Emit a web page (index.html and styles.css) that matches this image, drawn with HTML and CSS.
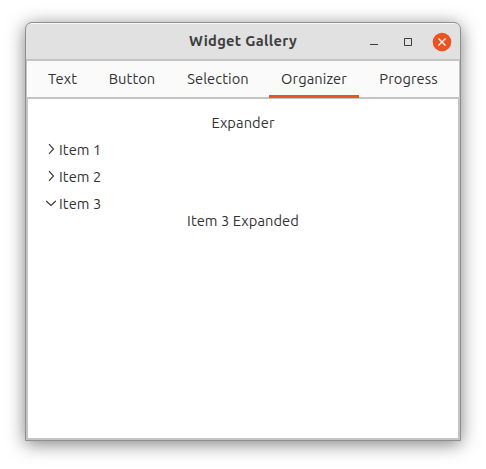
FILE: index.html
```html
<!DOCTYPE html>
<html lang="en">
<head>
<meta charset="utf-8">
<title>Widget Gallery</title>
<link rel="stylesheet" href="styles.css">
</head>
<body>
<main class="window">
  <header class="titlebar">
    <h1 class="title">Widget Gallery</h1>
    <div class="controls">
      <svg class="control" viewBox="0 0 20 20"><path d="M6 12.5h8" stroke="#3d3d3d"/></svg>
      <svg class="control" viewBox="0 0 20 20"><path d="M6.5 6.5h7v7h-7z" fill="none" stroke="#3d3d3d"/></svg>
      <svg class="control" viewBox="0 0 20 20"><circle cx="10" cy="10" r="9.3" fill="#e95420"/><path d="M6.5 6.5l7 7M13.5 6.5l-7 7" stroke="#fff" stroke-width="1.3"/></svg>
    </div>
  </header>
  <section class="notebook">
    <nav class="tabs">
      <div class="tab"><span>Text</span></div>
      <div class="tab"><span>Button</span></div>
      <div class="tab"><span>Selection</span></div>
      <div class="tab active"><span>Organizer</span></div>
      <div class="tab"><span>Progress</span></div>
    </nav>
    <div class="page">
      <p class="heading"><span>Expander</span></p>
      <div class="expander"><svg class="arrow" viewBox="0 0 12 12"><path d="M4 1.2l4.5 4.8L4 10.8"/></svg><span>Item 1</span></div>
      <div class="expander"><svg class="arrow" viewBox="0 0 12 12"><path d="M4 1.2l4.5 4.8L4 10.8"/></svg><span>Item 2</span></div>
      <div class="expander"><svg class="arrow" viewBox="0 0 12 12"><path d="M1.2 4L6 8.5 10.8 4"/></svg><span>Item 3</span></div>
      <p class="detail"><span>Item 3 Expanded</span></p>
    </div>
  </section>
</main>
</body>
</html>
```
FILE: styles.css
```css
* { box-sizing: border-box; }
body {
  margin: 0;
  padding: 22px 25px 28px;
  height: 469px;
  overflow: hidden;
  background: #fff;
  color: #333;
  font: 14.667px/18px Ubuntu, "Noto Sans", sans-serif;
  letter-spacing: .08px;
}
.window {
  width: 436px;
  height: 419px;
  border: 1px solid #8f8f8f;
  border-radius: 7px 7px 0 0;
  background: #c4c4c4;
  box-shadow: 0 3px 18px rgba(0, 0, 0, .5);
  overflow: hidden;
}
.titlebar {
  display: grid;
  grid-template-columns: 1fr auto;
  align-items: center;
  height: 36px;
  border-top: 1px solid #f8f8f8;
  border-radius: 6px 6px 0 0;
  background: #e1e1e1;
}
.title {
  grid-area: 1 / 1 / 2 / 3;
  margin: 0 0 1px;
  text-align: center;
  color: #3d3d3d;
  font-size: 14.667px;
  line-height: 18px;
  letter-spacing: .3px;
}
.controls {
  grid-area: 1 / 2;
  display: flex;
  gap: 14px;
  padding-right: 8px;
}
.control { display: block; width: 20px; height: 20px; }
.notebook { padding: 2px 1px 2px; }
.tabs {
  display: grid;
  grid-template-columns: 53px 70px 86px 90px 83px;
  gap: 8px;
  height: 38px;
  padding-left: 9px;
  background: #fafafa;
  border-bottom: 2px solid #c4c4c4;
}
.tab {
  height: 36px;
  padding-top: 9px;
  text-align: center;
  white-space: nowrap;
}
.active { height: 37px; border-bottom: 3px solid #e95420; }
.page {
  height: 339px;
  margin: 0 1px;
  padding: 15px 17px;
  background: #fff;
}
.heading, .detail { margin: 0; text-align: center; }
.heading { margin-bottom: 4px; }
.expander {
  display: flex;
  align-items: center;
  gap: 2px;
  height: 27px;
}
.arrow {
  width: 12px;
  height: 12px;
  margin-top: -1px;
  fill: none;
  stroke: #333;
  stroke-width: 1.1;
}
.detail { margin-top: -5px; }
```
